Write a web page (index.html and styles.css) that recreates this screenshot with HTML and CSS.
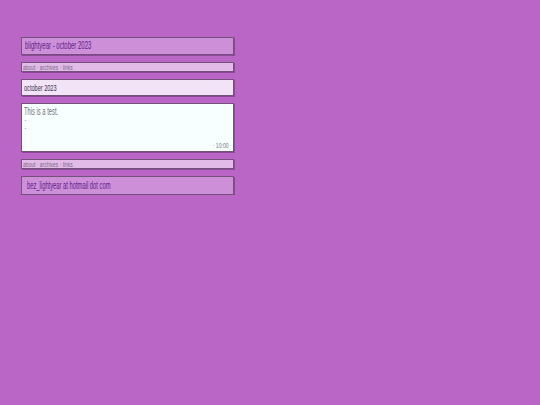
FILE: index.html
```html
<!DOCTYPE html>
<html>
<head>
<meta charset="utf-8">
<link rel="stylesheet" href="styles.css">
</head>
<body>
<div class="wrap">
  <div class="box header"><span class="t">blightyear - october 2023</span></div>
  <div class="box nav"><span class="t">about · archives · links</span></div>
  <div class="box date"><span class="t">october 2023</span></div>
  <div class="box post">
    <div class="ptext"><span class="t">This is a test.</span></div>
    <div class="dot">·</div>
    <div class="dot">·</div>
    <div class="time"><span class="t tr">· 10:00 ·</span></div>
  </div>
  <div class="box nav"><span class="t">about · archives · links</span></div>
  <div class="box footer"><span class="t">bez_lightyear at hotmail dot com</span></div>
</div>
</body>
</html>
```
FILE: styles.css
```css
html, body {
  margin: 0;
  padding: 0;
  background: #b966c6;
  font-family: "Liberation Sans", Arial, sans-serif;
}
.wrap {
  width: 213px;
  margin-left: 21px;
  padding-top: 37px;
  display: flex;
  flex-direction: column;
  gap: 7px;
}
.box {
  box-sizing: border-box;
  border: 1px solid #74517a;
  box-shadow: 1px 1px 0 rgba(60, 20, 70, 0.35);
  overflow: hidden;
  white-space: nowrap;
}
.t {
  display: inline-block;
  transform: scaleX(0.6);
  transform-origin: left center;
}
.tr {
  transform-origin: right center;
}
.header {
  background: #cc8fd8;
  color: #5f2088;
  font-size: 10px;
  height: 18px;
  line-height: 16px;
  padding-left: 3px;
}
.nav {
  background: #e2bbe9;
  color: #7a6a80;
  font-size: 8px;
  height: 10px;
  line-height: 9px;
  padding-left: 1px;
}
.nav .t {
  transform: scaleX(0.62);
}
.date {
  background: #f3e3f6;
  color: #33304f;
  font-size: 9px;
  height: 17px;
  line-height: 16px;
  padding-left: 2px;
}
.date .t {
  transform: scaleX(0.62);
}
.post {
  background: #f8ffff;
  color: #717175;
  font-size: 10px;
  height: 49px;
  padding: 2px 1px 0 2px;
  display: flex;
  flex-direction: column;
}
.ptext {
  line-height: 11px;
}
.ptext .t {
  transform: scaleX(0.58);
}
.dot {
  line-height: 8px;
  height: 8px;
  font-size: 8px;
  color: #77777d;
}
.time {
  align-self: flex-end;
  font-size: 8px;
  line-height: 9px;
  margin-top: 8px;
  color: #717175;
}
.time .t {
  transform: scaleX(0.64);
}
.footer {
  background: #cc8fd8;
  color: #5f2088;
  font-size: 10px;
  height: 19px;
  line-height: 18px;
  padding-left: 5px;
}
.footer .t {
  transform: scaleX(0.58);
}
```
